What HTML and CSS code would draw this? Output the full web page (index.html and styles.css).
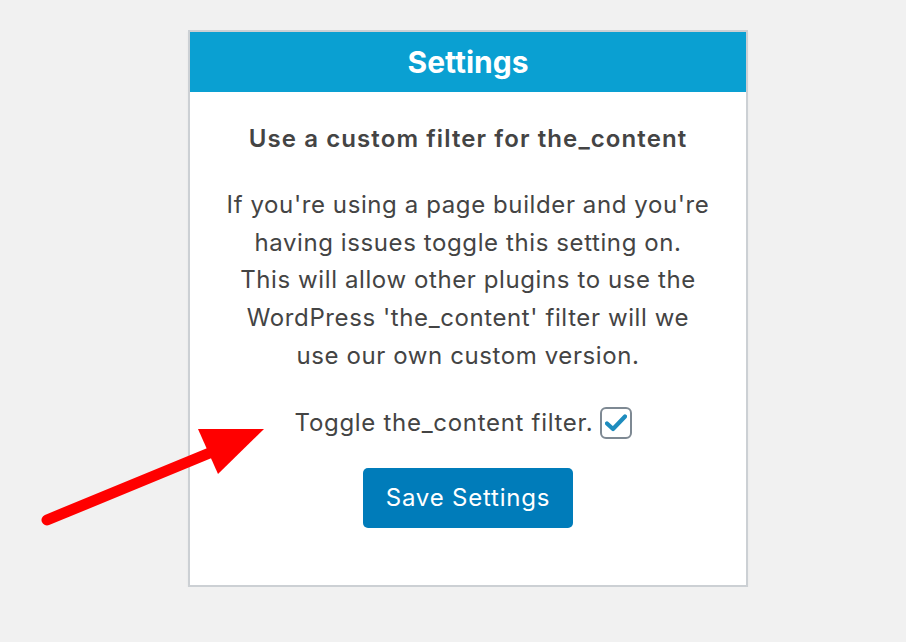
FILE: index.html
```html
<!DOCTYPE html>
<html lang="en">
<head>
  <meta charset="UTF-8">
  <title>Settings</title>
  <link rel="stylesheet" href="styles.css">
</head>
<body>

<div class="settings">
  <div class="settings-header">Settings</div>
  <div class="settings-body">
    <h2>Use a custom filter for the_content</h2>
    <p>If you're using a page builder and you're<br>
      having issues toggle this setting on.<br>
      This will allow other plugins to use the<br>
      WordPress 'the_content' filter will we<br>
      use our own custom version.</p>
    <label class="toggle">
      Toggle the_content filter.
      <span class="check">
        <svg width="22" height="18" viewBox="0 0 22 18"><path d="M2 9.5 L8 15 L20 2.5" fill="none" stroke="#1e8cbe" stroke-width="4.2" stroke-linecap="round" stroke-linejoin="round"/></svg>
      </span>
    </label>
    <button class="save">Save Settings</button>
  </div>
</div>

<svg class="arrow" width="906" height="642" viewBox="0 0 906 642">
  <line x1="47" y1="520" x2="212" y2="452" stroke="#ff0000" stroke-width="11" stroke-linecap="round"/>
  <polygon points="198,429 264,429 218,474" fill="#ff0000"/>
</svg>

</body>
</html>
```

FILE: styles.css
```css
body {
  margin: 0;
  background: #f1f1f1;
  font-family: Inter, "Noto Sans", sans-serif;
  color: #444;
}

.settings {
  width: 556px;
  margin: 30px 0 0 188px;
  background: #fff;
  border: 2px solid #ccd0d4;
  box-shadow: 0 2px 3px rgba(0,0,0,0.04);
}

.settings-header {
  height: 60px;
  line-height: 60px;
  background: #0aa0d2;
  color: #fff;
  font-size: 30px;
  font-weight: 700;
  text-align: center;
}

.settings-body {
  padding: 32px 10px 57px;
  text-align: center;
}

.settings-body h2 {
  margin: 0;
  font-size: 24px;
  line-height: 30px;
  font-weight: 600;
  letter-spacing: 1.1px;
}

.settings-body p {
  margin: 32px 0 0;
  font-size: 24px;
  line-height: 37.7px;
  letter-spacing: 0.6px;
}

.toggle {
  display: flex;
  justify-content: center;
  align-items: center;
  gap: 7px;
  margin-top: 32px;
  padding-right: 9px;
  font-size: 24px;
  line-height: 32px;
  letter-spacing: 0.7px;
}

.check {
  display: flex;
  align-items: center;
  justify-content: center;
  width: 28px;
  height: 28px;
  border: 2px solid #7e8993;
  border-radius: 6px;
  background: #fff;
  letter-spacing: 0;
}

.save {
  margin-top: 29px;
  height: 60px;
  padding: 0 23px;
  background: #007cba;
  color: #fff;
  border: none;
  border-radius: 5px;
  font-family: inherit;
  font-size: 24px;
  letter-spacing: 0.8px;
  cursor: pointer;
}

.arrow {
  position: absolute;
  left: 0;
  top: 0;
  pointer-events: none;
}
```
